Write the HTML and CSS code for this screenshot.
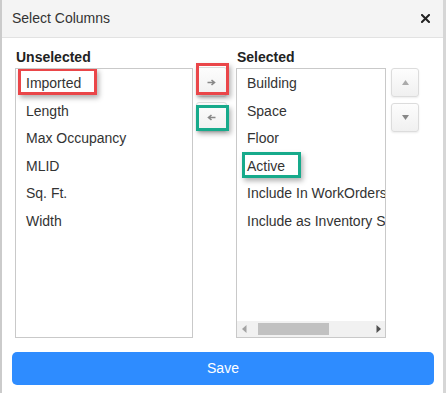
FILE: index.html
```html
<!DOCTYPE html>
<html>
<head>
<meta charset="utf-8">
<link rel="stylesheet" href="styles.css">
</head>
<body>
<div class="dialog">
  <div class="header">
    <span class="title">Select Columns</span>
    <svg class="close" width="9" height="9" viewBox="0 0 9 9"><path d="M1 1L8 8M8 1L1 8" stroke="#222" stroke-width="2" stroke-linecap="square"/></svg>
  </div>
  <div class="content">
    <div class="col col-left">
      <div class="label">Unselected</div>
      <div class="listbox">
        <div class="items">
          <div class="item">Imported<span class="mark mark-red mark-imported"></span></div>
          <div class="item">Length</div>
          <div class="item">Max Occupancy</div>
          <div class="item">MLID</div>
          <div class="item">Sq. Ft.</div>
          <div class="item">Width</div>
        </div>
      </div>
    </div>
    <div class="col col-move">
      <div class="btn btn-move">
        <svg width="9" height="7" viewBox="0 0 9 7"><path d="M0.5 3.5H7M4.5 1L7.5 3.5L4.5 6" stroke="#888" stroke-width="1.6" fill="none"/></svg>
        <span class="mark mark-red mark-btn1"></span>
      </div>
      <div class="btn btn-move">
        <svg width="9" height="7" viewBox="0 0 9 7"><path d="M8.5 3.5H2M4.5 1L1.5 3.5L4.5 6" stroke="#888" stroke-width="1.6" fill="none"/></svg>
        <span class="mark mark-green mark-btn2"></span>
      </div>
    </div>
    <div class="col col-right">
      <div class="label">Selected</div>
      <div class="listbox">
        <div class="items">
          <div class="item">Building</div>
          <div class="item">Space</div>
          <div class="item">Floor</div>
          <div class="item">Active<span class="mark mark-green mark-active"></span></div>
          <div class="item">Include In WorkOrders</div>
          <div class="item">Include as Inventory Space</div>
        </div>
        <div class="hscroll">
          <svg class="sarrow" width="5" height="8" viewBox="0 0 5 8"><path d="M4.5 0V8L0 4Z" fill="#a3a3a3"/></svg>
          <div class="track"><div class="thumb"></div></div>
          <svg class="sarrow" width="5" height="8" viewBox="0 0 5 8"><path d="M0.5 0V8L5 4Z" fill="#505050"/></svg>
        </div>
      </div>
    </div>
    <div class="col col-order">
      <div class="btn btn-order">
        <svg width="7" height="5" viewBox="0 0 7 5"><path d="M0 5H7L3.5 0Z" fill="#aaa"/></svg>
      </div>
      <div class="btn btn-order">
        <svg width="7" height="5" viewBox="0 0 7 5"><path d="M0 0H7L3.5 5Z" fill="#888"/></svg>
      </div>
    </div>
  </div>
  <div class="footer">
    <button class="save">Save</button>
  </div>
</div>
</body>
</html>
```

FILE: styles.css
```css
* { box-sizing: border-box; }
html, body { margin: 0; padding: 0; background: #fff; }
body {
  font-family: "Liberation Sans", Arial, sans-serif;
  color: #333;
  font-size: 14px;
}
.dialog {
  width: 446px;
  height: 393px;
  border-left: 2px solid #cbcbcb;
  border-right: 3px solid #d6d6d6;
  background: #fff;
}
.header {
  height: 38px;
  background: #f4f4f4;
  border-bottom: 1px solid #e2e2e2;
  display: flex;
  align-items: center;
  justify-content: space-between;
  padding: 0 13px 2px 10px;
}
.title { font-size: 14px; color: #333; }
.close { margin-top: 1px; }
.content {
  display: flex;
  padding: 10px 0 0 13px;
  height: 300px;
}
.col { display: flex; flex-direction: column; }
.label {
  font-weight: bold;
  font-size: 14px;
  height: 20px;
  line-height: 18px;
  padding-left: 1px;
  color: #222;
}
.col-left { width: 178px; }
.col-right { width: 150px; margin-left: 8px; }
.listbox {
  height: 270px;
  border: 1px solid #c9c9c9;
  display: flex;
  flex-direction: column;
  overflow: hidden;
}
.items { flex: 1; overflow: hidden; padding-top: 1px; }
.item {
  position: relative;
  height: 27.5px;
  line-height: 27.5px;
  padding-left: 10px;
  white-space: nowrap;
  color: #333;
}
.mark {
  position: absolute;
  border: 3px solid;
  box-shadow: 2px 3px 5px rgba(0,0,0,0.3);
  pointer-events: none;
}
.mark-red { border-color: #ea4649; }
.mark-green { border-color: #17aa8b; }
.mark-imported { left: 2px; top: -2px; width: 79px; height: 27px; }
.mark-active { left: 5px; top: -0.5px; width: 59px; height: 26px; }
.col-move {
  width: 35px;
  padding-top: 19px;
  padding-left: 3px;
  gap: 5px;
}
.btn {
  position: relative;
  display: flex;
  align-items: center;
  justify-content: center;
  background: linear-gradient(#fdfdfd, #f0f0f0);
  border: 1px solid #dcdcdc;
  border-radius: 3px;
  box-shadow: 0 1px 2px rgba(0,0,0,0.08);
}
.btn-move { width: 31px; height: 30px; }
.mark-btn1 { left: -1px; top: -5px; width: 33px; height: 32px; }
.mark-btn2 { left: -1px; top: 2px; width: 33px; height: 26px; }
.col-order {
  margin-left: 5px;
  padding-top: 20px;
  gap: 6px;
}
.btn-order { width: 28px; height: 29px; }
.hscroll {
  height: 16px;
  background: #f1f1f1;
  display: flex;
  align-items: center;
  padding: 0 4px 0 5px;
}
.track { flex: 1; height: 12px; padding: 0 0 0 11px; }
.thumb { width: 71px; height: 12px; background: #c1c1c1; }
.footer { padding: 14px 9px 0 10px; }
.save {
  width: 100%;
  height: 33px;
  border: none;
  border-radius: 5px;
  background: #2e8cff;
  color: #fff;
  font-family: "Liberation Sans", Arial, sans-serif;
  font-size: 14px;
  padding: 0 0 2px 0;
}
```
